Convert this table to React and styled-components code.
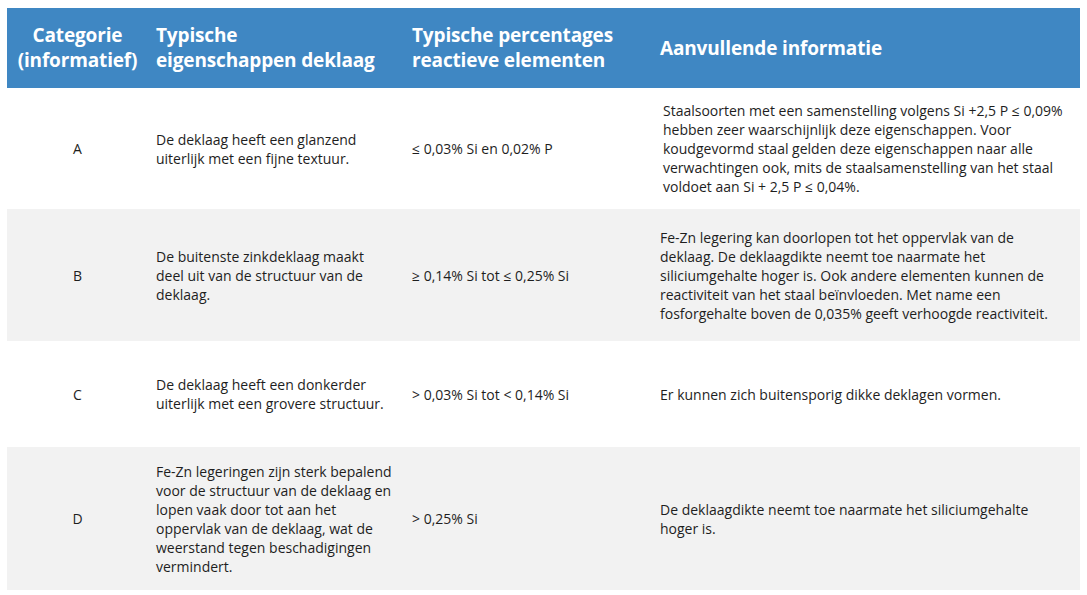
import React from 'react';
import styled, { createGlobalStyle } from 'styled-components';

const GlobalStyle = createGlobalStyle`
  body {
    margin: 8px 7px;
    background: #fff;
    font-family: "Open Sans", "Noto Sans", sans-serif;
  }
`;

const Table = styled.table`
  width: 1073px;
  border-collapse: collapse;
  table-layout: fixed;
  color: #1e1e1e;
`;

const HeadRow = styled.tr`
  background: #3f87c3;
  height: 80px;
`;

const HeadCell = styled.th`
  color: #fff;
  font-weight: 700;
  font-size: 19px;
  line-height: 25px;
  letter-spacing: -0.15px;
  padding: 0 8px;
  vertical-align: middle;
  text-align: ${(props) => (props.center ? 'center' : 'left')};
`;

const Row = styled.tr`
  height: ${(props) => props.h}px;
  background: ${(props) => (props.shaded ? '#f2f2f2' : '#fff')};
`;

const Cell = styled.td`
  font-size: 14px;
  line-height: 19px;
  padding: 0 ${(props) => (props.wide ? 0 : 8)}px 0 ${(props) => 8 + (props.indent || 0)}px;
  vertical-align: middle;
  text-align: ${(props) => (props.center ? 'center' : 'left')};
`;

const Line = styled.span`
  display: block;
  white-space: nowrap;
`;

const rows = [
  {
    cat: 'A',
    h: 121,
    props: ['De deklaag heeft een glanzend', 'uiterlijk met een fijne textuur.'],
    pct: '≤ 0,03% Si en 0,02% P',
    info: [
      'Staalsoorten met een samenstelling volgens Si +2,5 P ≤ 0,09%',
      'hebben zeer waarschijnlijk deze eigenschappen. Voor',
      'koudgevormd staal gelden deze eigenschappen naar alle',
      'verwachtingen ook, mits de staalsamenstelling van het staal',
      'voldoet aan Si + 2,5 P ≤ 0,04%.',
    ],
    indent: 3,
  },
  {
    cat: 'B',
    h: 132,
    props: ['De buitenste zinkdeklaag maakt', 'deel uit van de structuur van de', 'deklaag.'],
    pct: '≥ 0,14% Si tot ≤ 0,25% Si',
    info: [
      'Fe-Zn legering kan doorlopen tot het oppervlak van de',
      'deklaag. De deklaagdikte neemt toe naarmate het',
      'siliciumgehalte hoger is. Ook andere elementen kunnen de',
      'reactiviteit van het staal beïnvloeden. Met name een',
      'fosforgehalte boven de 0,035% geeft verhoogde reactiviteit.',
    ],
  },
  {
    cat: 'C',
    h: 106,
    props: ['De deklaag heeft een donkerder', 'uiterlijk met een grovere structuur.'],
    pct: '> 0,03% Si tot < 0,14% Si',
    info: ['Er kunnen zich buitensporig dikke deklagen vormen.'],
  },
  {
    cat: 'D',
    h: 143,
    props: [
      'Fe-Zn legeringen zijn sterk bepalend',
      'voor de structuur van de deklaag en',
      'lopen vaak door tot aan het',
      'oppervlak van de deklaag, wat de',
      'weerstand tegen beschadigingen',
      'vermindert.',
    ],
    pct: '> 0,25% Si',
    info: ['De deklaagdikte neemt toe naarmate het siliciumgehalte', 'hoger is.'],
  },
];

const Lines = ({ lines }) => lines.map((l) => <Line key={l}>{l}</Line>);

const App = () => {
  return (
    <>
      <GlobalStyle />
      <Table>
        <colgroup>
          <col style={{ width: 141 }} />
          <col style={{ width: 256 }} />
          <col style={{ width: 248 }} />
          <col style={{ width: 428 }} />
        </colgroup>
        <thead>
          <HeadRow>
            <HeadCell center>Categorie<br />(informatief)</HeadCell>
            <HeadCell>Typische<br />eigenschappen deklaag</HeadCell>
            <HeadCell>Typische percentages<br />reactieve elementen</HeadCell>
            <HeadCell>Aanvullende informatie</HeadCell>
          </HeadRow>
        </thead>
        <tbody>
          {rows.map((row, i) => (
            <Row key={row.cat} h={row.h} shaded={i % 2 === 1}>
              <Cell center>{row.cat}</Cell>
              <Cell><Lines lines={row.props} /></Cell>
              <Cell>{row.pct}</Cell>
              <Cell wide indent={row.indent}><Lines lines={row.info} /></Cell>
            </Row>
          ))}
        </tbody>
      </Table>
    </>
  );
};

export default App;
